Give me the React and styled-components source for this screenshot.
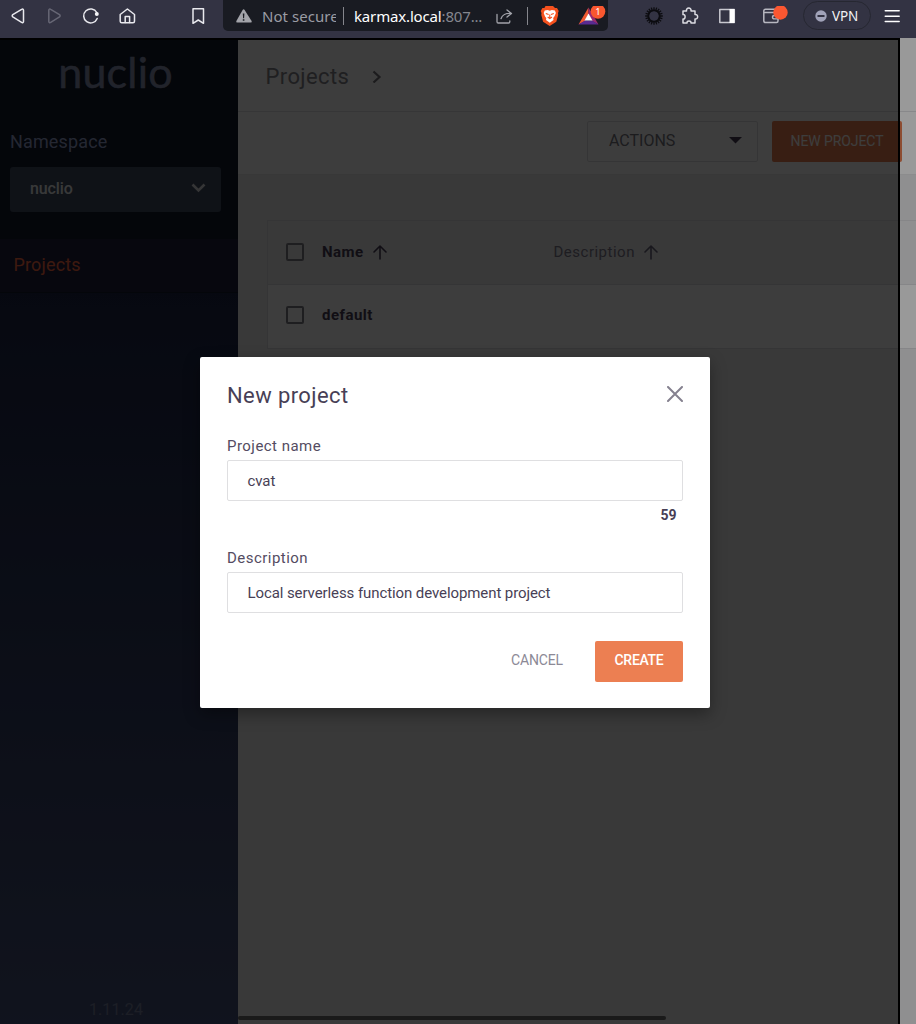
import React from "react";
import styled, { createGlobalStyle } from "styled-components";

const GlobalStyle = createGlobalStyle`
  *, *::before, *::after { box-sizing: border-box; }
  body { margin: 0; background: #000; font-family: Roboto, "Liberation Sans", sans-serif; }
  svg { display: block; flex: none; }
`;

const Window = styled.div`
  width: 916px;
  height: 1024px;
  display: flex;
  flex-direction: column;
  overflow: hidden;
`;

/* ---------- browser toolbar ---------- */

const BrowserBar = styled.header`
  flex: none;
  height: 38px;
  display: flex;
  align-items: flex-start;
  background: #333343;
  font-family: "Noto Sans", "Open Sans", sans-serif;
`;

const BarGlyph = styled.span`
  flex: none;
  display: block;
  width: ${(p) => p.$width || 20}px;
  height: 20px;
  margin-top: 6px;
  margin-left: ${(p) => p.$gap || 0}px;
`;

const AddressBar = styled.div`
  flex: none;
  display: flex;
  align-items: flex-start;
  width: 385px;
  height: 31px;
  margin-left: 15px;
  padding-left: 11px;
  background: #191b22;
  border-radius: 0 0 5px 5px;
`;

const SecurityLabel = styled.span`
  flex: none;
  width: 74px;
  margin-left: 8px;
  overflow: hidden;
  white-space: nowrap;
  color: #9a9ca4;
  font-size: 15px;
  line-height: 32px;
  letter-spacing: 0.05px;
`;

const BarDivider = styled.i`
  flex: none;
  width: 1px;
  height: 18px;
  margin-top: 7px;
  margin-left: ${(p) => p.$gap}px;
  background: #85868c;
`;

const Address = styled.span`
  flex: none;
  width: 132px;
  margin-left: 10px;
  white-space: nowrap;
  color: #85878f;
  font-size: 15px;
  line-height: 32px;
  letter-spacing: -0.16px;
  b { font-weight: 400; color: #fff; }
`;

const VpnButton = styled.div`
  flex: none;
  display: flex;
  align-items: center;
  gap: 5px;
  width: 68px;
  height: 29px;
  margin-top: 1px;
  margin-left: 14px;
  padding: 0 0 0 11px;
  border: 1px solid #262731;
  border-radius: 15px;
  color: #f2f2f4;
  font-size: 13.5px;
  letter-spacing: -0.1px;
`;

/* ---------- application ---------- */

const AppArea = styled.div`
  position: relative;
  flex: 1;
  min-height: 0;
  display: flex;
  overflow: hidden;
`;

const OuterShade = styled.div`
  position: absolute;
  inset: 0;
  background: rgba(0, 0, 0, 0.4);
`;

const InnerShade = styled.div`
  position: absolute;
  inset: 0 16px 0 0;
  border: solid #000;
  border-width: 2px 2px 0 0;
  background: rgba(0, 0, 0, 0.6);
`;

const Sidebar = styled.nav`
  flex: none;
  width: 238px;
  display: flex;
  flex-direction: column;
  background: #11192a;
`;

const Logo = styled.div`
  height: 86px;
  padding: 9px 7px 0 0;
  text-align: center;
  font-family: Lato, sans-serif;
  font-size: 43px;
  line-height: 50px;
  letter-spacing: 0.2px;
  -webkit-text-stroke: 0.5px #8b94b4;
  color: #8b94b4;
`;

const SideLabel = styled.div`
  height: 43px;
  padding: 7px 0 0 10px;
  font-size: 18px;
  line-height: 22px;
  letter-spacing: 0.15px;
  color: #98a4d0;
`;

const NamespaceSelect = styled.div`
  display: flex;
  align-items: center;
  justify-content: space-between;
  width: 211px;
  height: 45px;
  margin: 0 0 27px 10px;
  padding: 0 15px 3px 20px;
  border-radius: 3px;
  background: #404b61;
  color: #eceef0;
  font-size: 16px;
  font-weight: 500;
  letter-spacing: -0.1px;
`;

const SideItem = styled.div`
  height: 54px;
  padding: 15px 0 0 13.5px;
  border-bottom: 1px solid #11192a;
  background: #1e1e3e;
  font-size: 18px;
  line-height: 22px;
  letter-spacing: 0.15px;
  color: #ff6b42;
`;

const SideFill = styled.div`
  flex: 1;
  display: flex;
  align-items: flex-end;
  justify-content: center;
  padding: 0 6px 5px 0;
  background: linear-gradient(#1d2647, #47537d);
  color: #78819f;
  font-size: 16px;
  letter-spacing: 0.1px;
`;

const Main = styled.main`
  flex: none;
  width: 900px;
  display: flex;
  flex-direction: column;
  background: #eeeef1;
`;

const TitleBar = styled.div`
  display: flex;
  align-items: center;
  gap: 23px;
  height: 74px;
  padding: 3px 0 0 27.500px;
  border-bottom: 1px solid #e3e3e6;
  background: #fff;
  color: #84838a;
  font-size: 22px;
  letter-spacing: 0.4px;
`;

const ActionBar = styled.div`
  display: flex;
  gap: 14px;
  height: 63px;
  padding: 9px 0 0 349px;
  border-bottom: 1px solid #e9e9ec;
  background: #fff;
`;

const ActionsSelect = styled.div`
  display: flex;
  align-items: center;
  justify-content: space-between;
  width: 171px;
  height: 41px;
  padding: 0 15px 2px 21px;
  border: 1px solid #e0e0e2;
  border-radius: 2px;
  font-size: 16px;
  color: #78777f;
`;

const Button = styled.button`
  width: ${(p) => p.$width}px;
  height: 41px;
  padding: 0 0 ${(p) => p.$lift || 0}px;
  border: 0;
  border-radius: 2px;
  background: ${(p) => (p.$primary ? "#ec7f52" : "transparent")};
  color: ${(p) => (p.$primary ? "#fff" : "#8c8996")};
  font: ${(p) => p.$weight || 400} 14px Roboto, sans-serif;
  letter-spacing: ${(p) => p.$track || 0}px;
`;

const Table = styled.div`
  margin: 45px 0 0 29px;
  border: 1px solid #e0e0e3;
`;

const Row = styled.div`
  display: flex;
  align-items: center;
  height: 64px;
  padding: 0 0 1px 17.500px;
  border-bottom: ${(p) => (p.$head ? "1px solid #e0e0e3" : "0")};
  background: ${(p) => (p.$head ? "#eeeef1" : "#fff")};
  & + & { height: 63px; padding-bottom: 3px; }
`;

const Checkbox = styled.i`
  width: 18px;
  height: 18px;
  border: 2px solid #807f86;
  border-radius: 2px;
`;

const Cell = styled.div`
  display: flex;
  align-items: center;
  gap: 9px;
  width: ${(p) => p.$width}px;
  font-size: 15px;
  font-weight: ${(p) => (p.$strong ? 700 : 400)};
  letter-spacing: 0.5px;
  color: ${(p) => (p.$strong ? "#483f56" : "#7f7b8c")};
  &:nth-child(2) { margin-left: 18.500px; }
`;

const ScrollThumb = styled.div`
  position: absolute;
  left: 238px;
  bottom: 4px;
  width: 428px;
  height: 4px;
  border-radius: 2px;
  background: #1a1a1a;
`;

/* ---------- dialog ---------- */

const Dialog = styled.section`
  position: absolute;
  left: 200px;
  top: 319px;
  width: 510px;
  height: 351px;
  display: flex;
  flex-direction: column;
  padding: 24px 27px 26px;
  border-radius: 2px;
  background: #fff;
  box-shadow: 0 6px 16px rgba(0, 0, 0, 0.35);
  color: #483f56;
`;

const DialogHead = styled.div`
  display: flex;
  align-items: flex-start;
  justify-content: space-between;
  height: 53px;
  font-size: 22px;
  line-height: 29px;
  letter-spacing: 0.4px;
  svg { margin-top: 5px; }
`;

const FieldLabel = styled.label`
  height: 26px;
  font-size: 15px;
  line-height: 25px;
  letter-spacing: 0.46px;
  color: #544c62;
`;

const Field = styled.div`
  height: 41px;
  padding: 0 19.500px;
  border: 1px solid #dfdfe1;
  border-radius: 2px;
  font-size: 15px;
  line-height: 40px;
  letter-spacing: -0.09px;
`;

const Counter = styled.div`
  height: 45px;
  padding: 6px 6.500px 0 0;
  text-align: right;
  font-size: 14px;
  font-weight: 700;
  line-height: 17px;
`;

const DialogActions = styled.div`
  display: flex;
  justify-content: flex-end;
  gap: 12px;
  margin-top: auto;
`;

const line = (d, color = "#e9e9ee", width = 1.5) => (
  <path d={d} fill="none" stroke={color} strokeWidth={width} strokeLinecap="round" strokeLinejoin="round" />
);

const Glyph = ({ gap, width = 20, children }) => (
  <BarGlyph $gap={gap} $width={width}>
    <svg width={width} height="20" viewBox={`0 0 ${width} 20`}>{children}</svg>
  </BarGlyph>
);

const SortArrow = ({ color }) => (
  <svg width="14" height="15" viewBox="0 0 14 15">{line("M7 14V1.2M1 7 7 1l6 6", color, 1.6)}</svg>
);

const sunRays = Array.from({ length: 20 }, (_, i) => {
  const a = (i * Math.PI) / 10;
  return `M${10 + 5 * Math.cos(a)} ${10 + 5 * Math.sin(a)}L${10 + 8.8 * Math.cos(a)} ${10 + 8.8 * Math.sin(a)}`;
}).join("");

function BrowserToolbar() {
  return (
    <BrowserBar>
      <Glyph gap={8}>{line("M13.600 3.300c1-.7 1.900-.2 1.900.9v11.200c0 1.100-.9 1.600-1.900.9L4.800 10.900c-.8-.6-.8-1.600 0-2.200z")}</Glyph>
      <Glyph gap={16}>{line("M6.700 3.300c-1-.7-1.900-.2-1.900.9v11.200c0 1.100.9 1.600 1.900.9l8.800-5.400c.8-.6.8-1.600 0-2.200z", "#676775")}</Glyph>
      <Glyph gap={17}>
        {line("M15.800 6.500A7 7 0 1 0 16.200 12.500")}
        <circle cx="15.800" cy="8" r="2" fill="#f4f4f6" />
      </Glyph>
      <Glyph gap={16}>
        {line("M3.200 8.500 10.400 3l7.100 5.500v6.800c0 1-.5 1.500-1.500 1.500H4.700c-1 0-1.500-.5-1.500-1.500z")}
        {line("M8.200 16.500v-6h4.400v6")}
      </Glyph>
      <Glyph gap={51}>{line("M5 2.700h10.500v14.600l-5.250-3.300L5 17.300z")}</Glyph>
      <AddressBar>
        <Glyph>
          <path d="M8.600 4q1-1.400 2 0l7 11q.8 1.600-1 1.600H3.400q-1.800 0-1-1.600z" fill="#a3a4aa" />
          <path d="M8.800 7.500h1.600l-.3 4.700h-1zM8.800 13.200h1.600v1.500H8.800z" fill="#191b22" />
        </Glyph>
        <SecurityLabel>Not secure</SecurityLabel>
        <BarDivider $gap={7} />
        <Address><b>karmax.local</b>:807...</Address>
        <Glyph gap={8}>
          {line("M3 8.500v7.300q0 1.200 1.200 1.200h10.400q1.200 0 1.200-1.200v-1", "#a2a3aa", 1.3)}
          {line("M13 4l4.500 3.500L13 11M17 7.500c-5-.5-9 1.700-10 5.200", "#a2a3aa", 1.3)}
        </Glyph>
        <BarDivider $gap={13} />
        <Glyph gap={12}>
          <path d="M5.500 0H13l2 2h2l1.700 3-.7 2 .2 2-1.900 6.700L9.700 20l-6.600-4.300L1.300 9l.2-2-.8-2 1.700-3h2z" fill="#f4511e" />
          <path d="M4.700 4.500 7.700 4l2 .7 2.200-.7 3 .5 1 2.500-1.500 3.500-1.200 1.500.3 2-3.700 2.800L6 14l.3-2L5 10.500 3.700 7z" fill="#fff" />
          <path d="M5.800 7.500l2.800 1M13.800 7.500l-2.800 1M9.800 8.500v4M7.700 11l2.100 1.600 2.100-1.600" fill="none" stroke="#f4511e" strokeWidth="1.100" />
        </Glyph>
        <Glyph gap={18} width={28}>
          <path d="M10.500 1.500.500 18.500 7 15l3.500-7z" fill="#f15a31" />
          <path d="M10.500 1.500l10 17L14 15l-3.500-7z" fill="#9a2b70" />
          <path d="M.5 18.500h20L14 14.500H7z" fill="#592b91" />
          <path d="M10.500 7.500l4 7h-8z" fill="#fff" />
          <circle cx="20" cy="5.500" r="7.300" fill="#f9572f" />
          <text x="20" y="9" fill="#fff" fontSize="9.500" textAnchor="middle" fontFamily="Noto Sans, sans-serif">1</text>
        </Glyph>
      </AddressBar>
      <Glyph gap={36}>
        <circle cx="10" cy="10" r="5.700" fill="none" stroke="#0c0c10" strokeWidth="1.800" />
        <path d={sunRays} stroke="#0c0c10" strokeWidth="1.300" />
      </Glyph>
      <Glyph gap={16}>
        {line("M3 5h3.500c-.7-4 5.200-4 4.500 0H15v3.500c3.500-.5 3.500 5 0 4.500V17h-4c.3-2.800-4.300-2.800-4 0H3v-4c2.800.5 2.800-5 0-4.500z", "#dcdce2", 1.5)}
      </Glyph>
      <Glyph gap={17}>
        {line("M2.800 3.500h14.500v13H2.800z", "#c8c8cf", 1.5)}
        <path d="M12.500 3h5v14h-5z" fill="#fff" />
      </Glyph>
      <Glyph gap={25} width={27}>
        {line("M15.500 6V4.500q0-1.200-1.200-1.200H3.500q-1.700 0-1.700 1.700v9.700q0 1.800 1.800 1.800h10.900q1.500 0 1.500-1.500V8q0-1.500-1.500-1.500H3", "#b7b7c0", 1.5)}
        {line("M16 9.500h-3.500q-2 0-2 1.700t2 1.700H16", "#b7b7c0", 1.4)}
        <circle cx="18.500" cy="6.500" r="7.200" fill="#fb5731" />
      </Glyph>
      <VpnButton>
        <svg width="12" height="12" viewBox="0 0 12 12">
          <circle cx="6" cy="6" r="5.700" fill="#a1a3b9" />
          <path d="M2.500 5h7v2h-7z" fill="#333343" />
        </svg>
        VPN
      </VpnButton>
      <Glyph gap={11}>{line("M3.200 4.800h14M3.200 10.200h14M3.200 15.500h14", "#fff", 1.4)}</Glyph>
    </BrowserBar>
  );
}

export default function App() {
  return (
    <Window>
      <GlobalStyle />
      <BrowserToolbar />
      <AppArea>
        <Sidebar>
          <Logo>nuclio</Logo>
          <SideLabel>Namespace</SideLabel>
          <NamespaceSelect>
            nuclio
            <svg width="15" height="10" viewBox="0 0 15 10"><path d="M1.500 1.500l6 6 6-6" fill="none" stroke="#dcdee2" strokeWidth="2.600" /></svg>
          </NamespaceSelect>
          <SideItem>Projects</SideItem>
          <SideFill>1.11.24</SideFill>
        </Sidebar>
        <Main>
          <TitleBar>
            Projects
            <svg width="10" height="14" viewBox="0 0 10 14"><path d="M1.500 2.500 7.500 8l-6 5.500" fill="none" stroke="#75747a" strokeWidth="2.200" /></svg>
          </TitleBar>
          <ActionBar>
            <ActionsSelect>
              ACTIONS
              <svg width="13" height="7" viewBox="0 0 13 7"><path d="M0 0h13L6.500 6.500z" fill="#483f56" /></svg>
            </ActionsSelect>
            <Button $primary $width={130} $lift={2} $track={-0.1}>NEW PROJECT</Button>
            <Button $primary $width={130} />
          </ActionBar>
          <Table>
            <Row $head>
              <Checkbox />
              <Cell $strong $width={231.5}>Name<SortArrow color="#483f56" /></Cell>
              <Cell $width={300}>Description<SortArrow color="#69647a" /></Cell>
            </Row>
            <Row>
              <Checkbox />
              <Cell $strong $width={231.5}>default</Cell>
            </Row>
          </Table>
        </Main>
        <OuterShade />
        <InnerShade />
        <ScrollThumb />
        <Dialog>
          <DialogHead>
            New project
            <svg width="16" height="16" viewBox="0 0 16 16">{line("M1 1l14 14M15 1 1 15", "#85818f", 2)}</svg>
          </DialogHead>
          <FieldLabel>Project name</FieldLabel>
          <Field>cvat</Field>
          <Counter>59</Counter>
          <FieldLabel>Description</FieldLabel>
          <Field>Local serverless function development project</Field>
          <DialogActions>
            <Button $width={92} $lift={3} $track={-0.15}>CANCEL</Button>
            <Button $primary $width={88} $lift={3} $weight={500} $track={-0.3}>CREATE</Button>
          </DialogActions>
        </Dialog>
      </AppArea>
    </Window>
  );
}
